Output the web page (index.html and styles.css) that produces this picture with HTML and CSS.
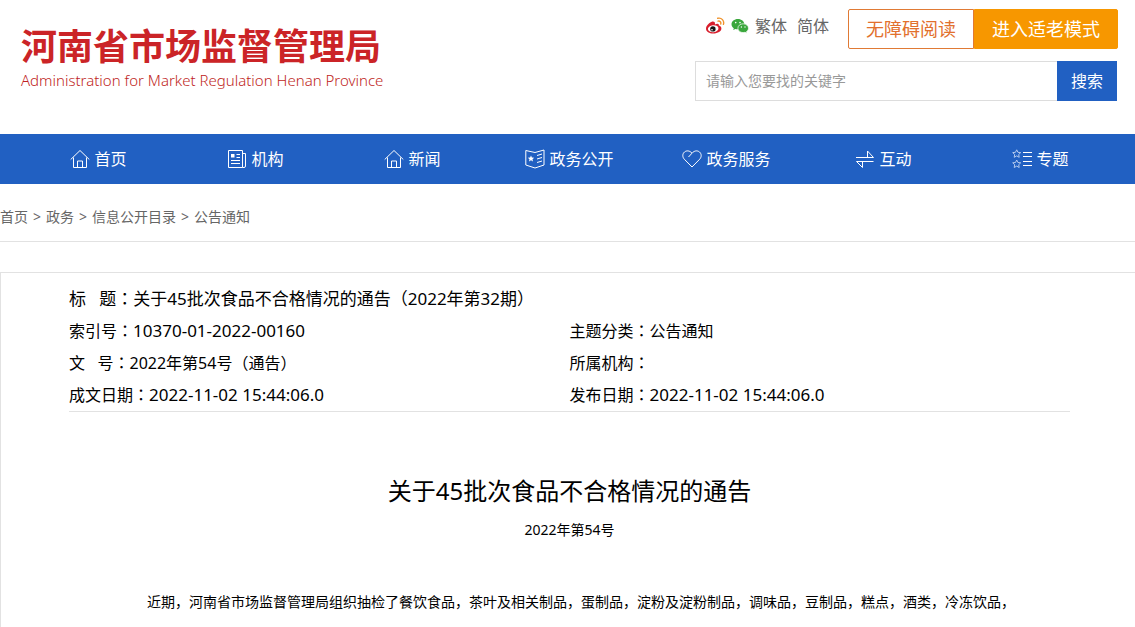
FILE: index.html
```html
<!DOCTYPE html>
<html lang="zh-CN">
<head>
<meta charset="utf-8">
<meta name="viewport" content="width=device-width, initial-scale=1">
<title>关于45批次食品不合格情况的通告</title>
<link rel="stylesheet" href="styles.css">
</head>
<body>
<header class="header">
  <div class="brand">
    <div class="brand-name">河南省市场监督管理局</div>
    <div class="brand-sub">Administration for Market Regulation Henan Province</div>
  </div>
  <div class="tools">
    <div class="toolbar">
      <a class="social" href="#" aria-label="微博">
        <svg width="20" height="18" viewBox="0 0 20 18">
          <path d="M7.3 4.6C4.8 5.3 1 8.800 1 11.700c0 3 3.400 4.800 7.200 4.800 4.800 0 8.200-2.400 8.200-5 0-1.700-1.300-2.600-2.600-2.900.5-1.500-.8-2.600-3.900-1.200.5-1.900-.5-3.100-2.600-2.800z" fill="#d81e2c"/>
          <ellipse cx="8.200" cy="11.700" rx="5.300" ry="3.500" fill="#fff" transform="rotate(-7 8.200 11.700)"/>
          <circle cx="7.900" cy="11.900" r="2.700" fill="#161616"/>
          <circle cx="7" cy="12.700" r=".8" fill="#fff"/>
          <path d="M12.700 1.300c3.900-.9 6.900 2.400 5.700 6.100M13 4.100c2-.4 3.300 1.100 2.700 2.900" fill="none" stroke="#f0932c" stroke-width="1.400" stroke-linecap="round"/>
        </svg>
      </a>
      <a class="social" href="#" aria-label="微信">
        <svg width="18" height="16" viewBox="0 0 18 16">
          <path d="M6.900 1C3.300 1 .5 3.300.5 6.200c0 1.700.9 3.100 2.300 4l-.6 1.900 2.200-1.100c.8.200 1.600.3 2.500.3 3.600 0 6.400-2.300 6.400-5.100S10.500 1 6.900 1z" fill="#3aa73c"/>
          <circle cx="4.700" cy="4.600" r=".8" fill="#fff"/><circle cx="9" cy="4.600" r=".8" fill="#fff"/>
          <path d="M12.200 5.800c-3.100 0-5.300 2-5.300 4.400 0 2.500 2.300 4.400 5.300 4.400.7 0 1.300-.1 1.900-.3l1.900 1-.5-1.700c1.200-.8 2-2 2-3.400 0-2.400-2.300-4.400-5.300-4.400z" fill="#3aa73c" stroke="#fff" stroke-width=".7"/>
          <circle cx="10.400" cy="9" r=".7" fill="#fff"/><circle cx="14" cy="9" r=".7" fill="#fff"/>
        </svg>
      </a>
      <a class="lang" href="#">繁体</a>
      <a class="lang" href="#">简体</a>
      <div class="modes">
        <a class="mode" href="#">无障碍阅读</a>
        <a class="mode mode-elder" href="#">进入适老模式</a>
      </div>
    </div>
    <form class="search">
      <input class="search-input" type="text" aria-label="关键字" placeholder="请输入您要找的关键字">
      <button class="search-button" type="submit">搜索</button>
    </form>
  </div>
</header>

<nav class="nav">
  <a class="nav-item" href="#">
    <svg class="icon" viewBox="0 0 20 20"><path d="M.7 10.500 10 1.500l9.300 9M3.500 8.500v10h13v-10M7.500 18.500v-6.500h5v6.500"/></svg>首页</a>
  <a class="nav-item" href="#">
    <svg class="icon" viewBox="0 0 20 20"><path d="M1.500 1.500h14v17h-14zM15.500 4.500h3v12.500q0 1.500-1.500 1.500h-1.500M4 11.500h9M4 14.500h9M9.500 5.500H13M9.500 8.500H13"/><path class="solid" d="M4 5h3.500v3.500H4z"/></svg>机构</a>
  <a class="nav-item" href="#">
    <svg class="icon" viewBox="0 0 20 20"><path d="M.7 10.500 10 1.500l9.300 9M3.500 8.500v10h13v-10M7.500 18.500v-6.500h5v6.500"/></svg>新闻</a>
  <a class="nav-item" href="#">
    <svg class="icon" viewBox="0 0 20 20"><path d="M.8 1.500 10 3.500l9-2.500v15l-9 3-9.200-3zM12 6.500l5-1.500M12 10l5-1.500M12 13.500l5-1.500"/><path class="solid" d="m6 6.500.9 2.100 2.300.2-1.700 1.500.5 2.200-2-1.200-2 1.200.5-2.200-1.700-1.500 2.300-.2z"/></svg>政务公开</a>
  <a class="nav-item" href="#">
    <svg class="icon" viewBox="0 0 20 20"><path d="M10 18 2.300 10.200C.2 7.900.4 4.700 2.500 3 4.700 1.200 7.800 1.600 10 4.200c2.200-2.600 5.300-3 7.500-1.200 2.100 1.700 2.300 4.900.2 7.200zM10 4.200 6.500 8"/></svg>政务服务</a>
  <a class="nav-item" href="#">
    <svg class="icon" viewBox="0 0 20 20"><path d="M1 8.500h17.500L12.500 2v6.500M18.500 12.500H1.500l6 6v-6"/></svg>互动</a>
  <a class="nav-item" href="#">
    <svg class="icon" viewBox="0 0 20 20"><path class="faint" d="m4.700.8 1.200 2.500 2.800.3-2 1.900.5 2.800-2.500-1.400-2.500 1.400.5-2.800-2-1.900 2.800-.3zM4.700 11l1.200 2.500 2.800.3-2 1.900.5 2.800-2.500-1.400-2.500 1.400.5-2.800-2-1.900 2.800-.3z"/><path d="M11 3.500h9M11 7.500h9M11 12.500h9M11 16.500h9"/></svg>专题</a>
</nav>

<nav class="crumbs" aria-label="当前位置">
  <a href="#">首页</a><span>&gt;</span><a href="#">政务</a><span>&gt;</span><a href="#">信息公开目录</a><span>&gt;</span><a href="#">公告通知</a>
</nav>

<main class="card">
  <div class="meta">
    <div class="meta-title">标&nbsp;&nbsp; 题<span class="colon" lang="zh-TW">：</span>关于45批次食品不合格情况的通告（2022年第32期）</div>
    <div>索引号<span class="colon" lang="zh-TW">：</span><span class="figures">10370-01-2022-00160</span></div>
    <div>主题分类<span class="colon" lang="zh-TW">：</span>公告通知</div>
    <div>文&nbsp;&nbsp; 号<span class="colon" lang="zh-TW">：</span>2022年第54号（通告）</div>
    <div>所属机构<span class="colon" lang="zh-TW">：</span></div>
    <div>成文日期<span class="colon" lang="zh-TW">：</span><span class="figures">2022-11-02 15:44:06.0</span></div>
    <div>发布日期<span class="colon" lang="zh-TW">：</span><span class="figures">2022-11-02 15:44:06.0</span></div>
  </div>
  <article class="article">
    <h1 class="title">关于45批次食品不合格情况的通告</h1>
    <p class="number">2022年第54号</p>
    <p class="text">近期，河南省市场监督管理局组织抽检了餐饮食品，茶叶及相关制品，蛋制品，淀粉及淀粉制品，调味品，豆制品，糕点，酒类，冷冻饮品，</p>
  </article>
</main>
</body>
</html>
```
FILE: styles.css
```css
* {
  box-sizing: border-box;
}

body {
  display: flex;
  flex-direction: column;
  min-height: 100vh;
  margin: 0;
  background: #fff;
  color: #000;
  font: 16px/32px "Noto Sans", "Noto Sans CJK SC", sans-serif;
}

a {
  color: inherit;
  text-decoration: none;
}

.header {
  display: flex;
  justify-content: space-between;
  padding: 9px 17px 33px 21px;
}

.brand {
  padding-top: 18px;
}

.brand-name {
  color: #cb2427;
  font-size: 36px;
  font-weight: 700;
  line-height: 40px;
}

.brand-sub {
  color: #c01f24;
  font-size: 15px;
  font-weight: 300;
  line-height: 26px;
}

.tools {
  display: flex;
  flex-direction: column;
  gap: 12px;
  width: 423px;
}

.toolbar {
  display: flex;
  align-items: center;
  justify-content: flex-end;
  color: #666;
}

.social {
  display: flex;
  margin: 0 6px 6px 0;
}

.lang {
  margin: 0 10px 6px 0;
}

.modes {
  display: flex;
  margin-left: 9px;
  font-size: 18px;
  line-height: 38px;
}

.mode {
  padding: 0 17px;
  border: 1px solid #e07a35;
  border-radius: 2px 0 0 2px;
  color: #e2702d;
}

.mode-elder {
  border-color: #f79700;
  border-radius: 0 2px 2px 0;
  background: #f79700;
  color: #fff;
}

.search {
  display: flex;
  height: 40px;
  margin-right: 1px;
}

.search-input {
  flex: 1;
  min-width: 0;
  padding: 0 10px;
  border: 1px solid #ddd;
  border-right: 0;
  font: inherit;
  font-size: 14px;
}

.search-input::placeholder {
  color: #999;
}

.search-button {
  width: 60px;
  padding: 0;
  border: 0;
  background: #2160c2;
  color: #fff;
  font: inherit;
}

.nav {
  display: grid;
  grid-template-columns: repeat(7, 1fr);
  padding: 0 16px 0 20px;
  background: #2160c2;
  color: #fff;
  line-height: 50px;
}

.nav-item {
  display: flex;
  align-items: center;
  justify-content: center;
  gap: 4px;
}

.icon {
  width: 20px;
  height: 20px;
  fill: none;
  stroke: #fff;
}

.icon .solid {
  fill: #fff;
  stroke: none;
}

.icon .faint {
  stroke: #b5cbee;
}

.crumbs {
  display: flex;
  gap: 5px;
  padding: 23px 0 14px;
  border-bottom: 1px solid #e2e2e2;
  color: #666;
  font-size: 14px;
  line-height: 20px;
}

.card {
  flex: 1;
  margin-top: 30px;
  padding: 10px 65px 0 68px;
  border: 1px solid #e2e2e2;
  border-width: 1px 0 0 1px;
}

.meta {
  display: grid;
  grid-template-columns: 1fr 1fr;
  border-bottom: 1px solid #e2e2e2;
}

.meta-title {
  grid-column: 1 / -1;
  font-size: 17px;
}

.colon {
  font-family: "Noto Sans CJK TC", sans-serif;
  line-height: 1;
}

.figures {
  font-size: 17px;
  line-height: 1;
}

.article {
  padding: 59px 50px 0;
}

.title {
  margin: 0;
  font-size: 24px;
  font-weight: 400;
  line-height: 40px;
  text-align: center;
}

.number {
  margin: 0;
  font-size: 14px;
  line-height: 38px;
  text-align: center;
}

.text {
  margin: 39px 0 0;
  font-size: 14px;
  line-height: 28px;
  text-indent: 2em;
}
```
